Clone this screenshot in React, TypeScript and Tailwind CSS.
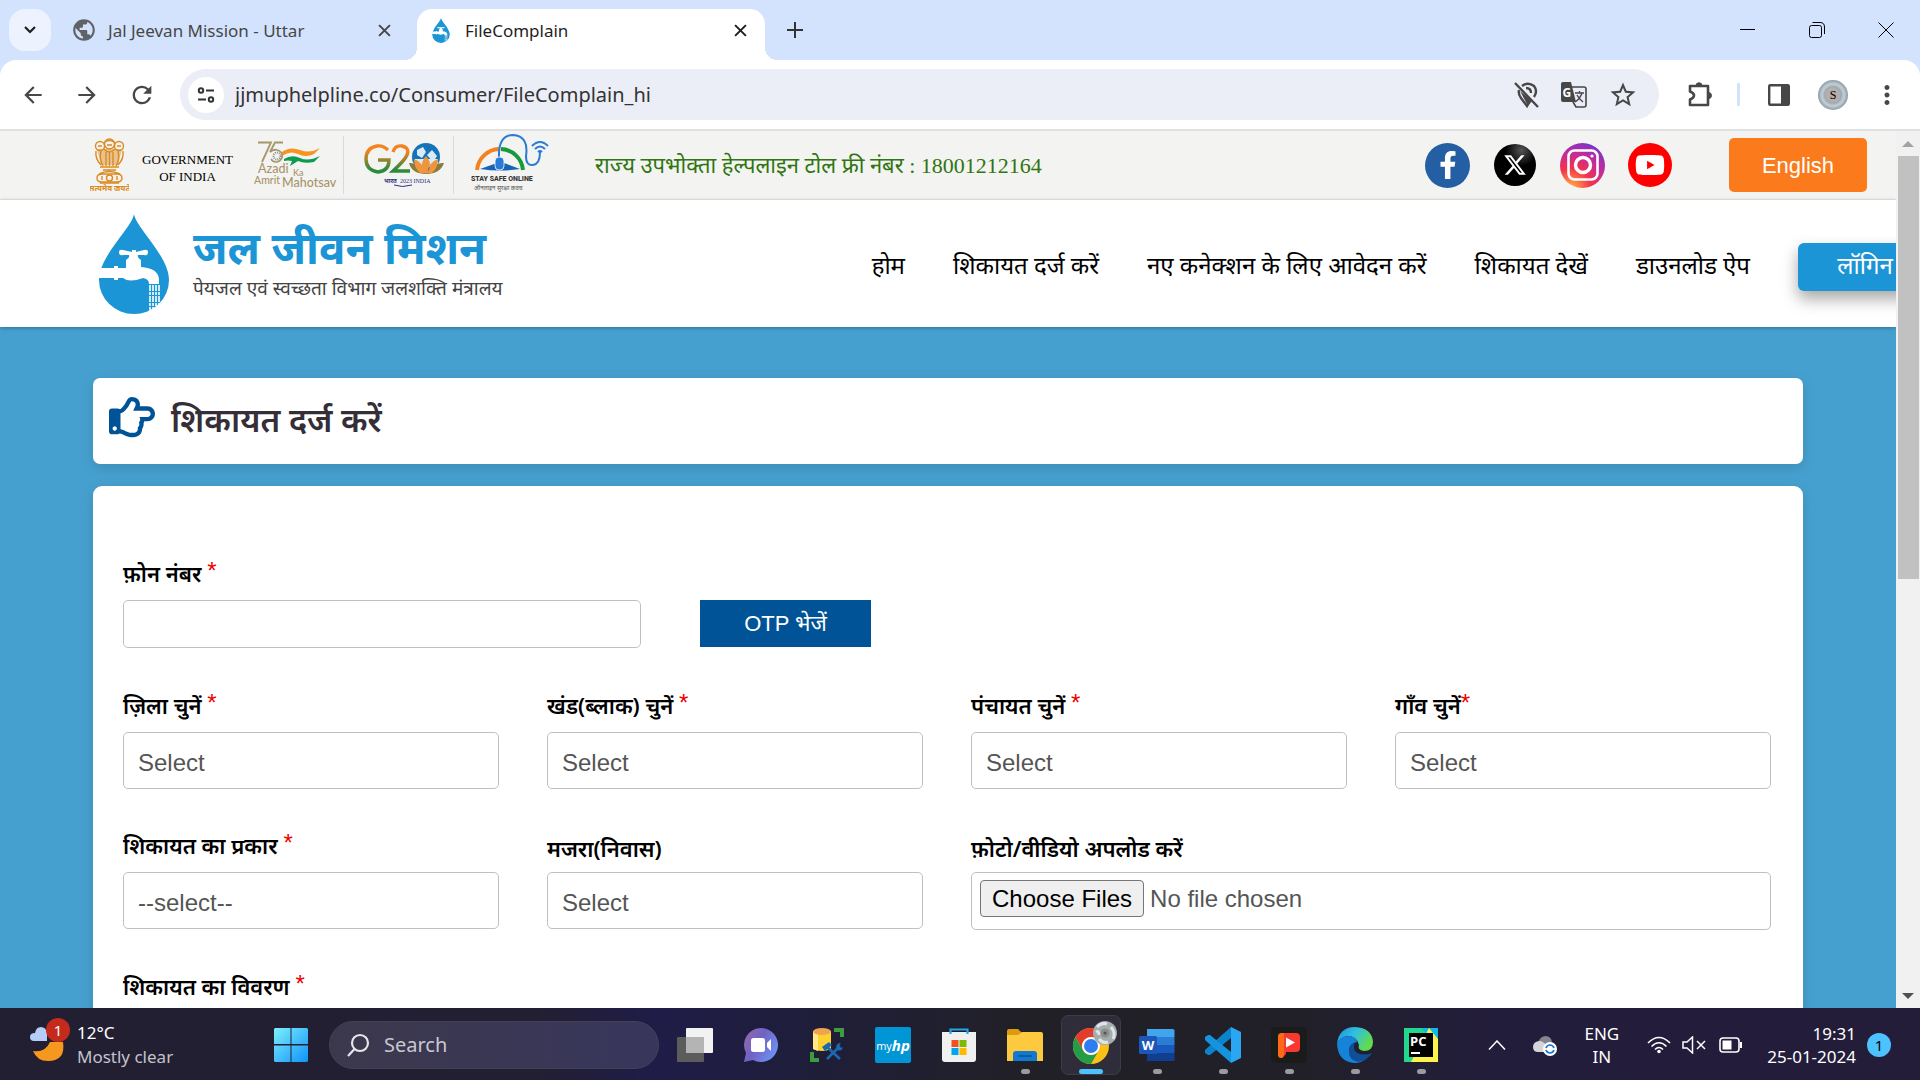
import type { ReactNode } from "react";
import { FaFacebookF, FaRegHandPointRight, FaYoutube } from "react-icons/fa";
import { FaXTwitter } from "react-icons/fa6";
import { MdArrowBack, MdArrowForward, MdRefresh, MdStarBorder, MdMoreVert, MdPublic } from "react-icons/md";

const ui = "font-['Noto_Sans','Open_Sans',sans-serif]";

function DropLogo({ className }: { className: string }) {
  return (
    <svg viewBox="0 0 70 100" className={className} aria-hidden="true">
      <path d="M35 0C37 14 70 42 70 66A35 34 0 0 1 0 66C0 42 33 14 35 0Z" fill="#1c95d6" />
      <path
        d="M20 38Q20 35 24 36L33 38V36H37V38L45 36Q49 35 49 38Q49 42 45 41L39 41Q38 44 42 46V53Q59 54 60 65V70H50Q50 65 44 64Q30 69 24 64H19V66H15V64H0V54H15V52H19V54H27V46Q31 44 30 41L24 41Q20 42 20 38Z"
        fill="#fff"
      />
      <path d="M51 71V98M54 71V96M57 71V95M60 71V92" stroke="#fff" strokeWidth="1.6" strokeDasharray="6 1 3 1" />
    </svg>
  );
}

function Emblem() {
  return (
    <svg viewBox="0 0 39 55" className="h-[55px] w-[39px]" aria-hidden="true">
      <g fill="none" stroke="#dc8a1e" strokeWidth="1.4">
        <circle cx="19.500" cy="6" r="5" />
        <circle cx="10" cy="8" r="4.500" />
        <circle cx="29" cy="8" r="4.500" />
        <path d="M15 4q4-3 9 0M17 7h5M8 8h4M27 8h4M14 11q5 6 11 0M6 13q-1 8 5 14M33 13q1 8-5 14M11 13q-2 8 2 15M28 13q2 8-2 15M16 14v14M19.500 14v14M23 14v14" />
        <path d="M10 29h19M13 32h13M9 36q10-5 21 0M7 40q0-4 5-4h15q5 0 5 4t-5 4H12q-5 0-5-4Z" />
        <circle cx="19.500" cy="40" r="3" />
        <path d="M12 38v4M27 38v4M10 45h19" />
      </g>
      <path d="M7 11h25l-4 16H11Z" fill="#dc8a1e" opacity=".45" />
      <text x="19.500" y="53" textAnchor="middle" fontSize="8" fontWeight="700" fill="#dc8a1e">सत्यमेव जयते</text>
    </svg>
  );
}

function AzadiLogo() {
  return (
    <svg viewBox="0 0 84 48" className="h-[48px] w-[84px]" aria-label="75 Azadi Ka Amrit Mahotsav">
      <path d="M4 1.500H17L8 21M29 1.500H21L16 11Q19 8 23 9" fill="none" stroke="#a8956a" strokeWidth="1.800" />
      <path d="M28 11Q36 5 46 9T66 7L60 13Q52 17 44 13T28 15Z" fill="#f7931e" />
      <path d="M30 18Q38 13 46 17T66 15L60 21Q50 23 44 20L36 25L38 20Q34 19 30 20Z" fill="#0c9b50" />
      <path d="M23 9A6 6 0 1 1 17 18" fill="none" stroke="#a8956a" strokeWidth="1.500" />
      <circle cx="23" cy="15" r="3.500" fill="none" stroke="#8d8d8d" strokeWidth="2" strokeDasharray="1 1" />
      <g fill="#a8956a" fontFamily="Lato, sans-serif" fontWeight="500">
        <text x="4" y="32" fontSize="12.500">Azadi</text>
        <text x="39" y="35" fontSize="9">Ka</text>
        <text x="0" y="43" fontSize="10.500">Amrit</text>
        <text x="28" y="46" fontSize="12.500">Mahotsav</text>
      </g>
    </svg>
  );
}

function G20Logo() {
  return (
    <svg viewBox="0 0 80 44" className="h-[44px] w-[80px]" aria-label="G20">
      <defs>
        <linearGradient id="g20" x1="0" y1="0" x2="0" y2="1">
          <stop offset=".2" stopColor="#f58220" />
          <stop offset=".9" stopColor="#2e8b3d" />
        </linearGradient>
      </defs>
      <path d="M24 7Q19 2 13 3Q2 5 2 16T14 29Q25 28 25 17H14M29 9Q31 2 38 3Q46 5 43 12Q41 17 29 28H46" fill="none" stroke="url(#g20)" strokeWidth="3.400" />
      <circle cx="62" cy="14" r="14" fill="#1673b8" />
      <path d="M53 7l6-3 3 5-4 6-5-3ZM63 12l5-5 5 6-4 6ZM51 16h23v8H51Z" fill="#d8ecf7" />
      <path d="M45 20Q54 19 62 30Q70 19 80 20Q76 31 62 31T45 20Z" fill="#8a7a3c" />
      <path d="M50 16Q58 18 61 30H56Q50 25 50 16ZM74 16Q66 18 63 30H68Q74 25 74 16ZM62 13Q70 22 62 31Q54 22 62 13Z" fill="#f0953c" />
      <text x="20" y="40" fontSize="6" fontWeight="700" fill="#2c2f83">भारत</text>
      <text x="36" y="40" fontSize="6" fill="#2c2f83" fontFamily="Liberation Serif, serif">2023 INDIA</text>
      <path d="M30 42Q38 45 48 42" fill="none" stroke="#2c2f83" />
    </svg>
  );
}

function StaySafeLogo() {
  return (
    <svg viewBox="0 0 78 58" className="h-[58px] w-[78px]" aria-label="Stay Safe Online">
      <path d="M6 36A23 23 0 0 1 28 15" fill="none" stroke="#f58220" strokeWidth="4" />
      <path d="M30 15A23 23 0 0 1 52 36" fill="none" stroke="#159a3c" strokeWidth="4" />
      <path d="M9 35L26 29H33L49 35Q29 38 9 35Z" fill="#1763b8" />
      <path d="M28 24Q27 1 42 1Q58 2 55 22Q55 32 62 31Q69 30 69 18" fill="none" stroke="#2a7bd6" strokeWidth="2" />
      <rect x="24" y="23" width="9" height="13" rx="4" fill="#2a7bd6" stroke="#fff" strokeWidth="0.800" />
      <path d="M61 12Q69 4 77 12M64 15Q69 10 74 15M67 18Q69 16 71 18" fill="none" stroke="#2a7bd6" strokeWidth="2" />
      <text x="0" y="47" fontSize="7" fontWeight="800" fill="#333" fontFamily="Roboto, sans-serif">STAY SAFE ONLINE</text>
      <text x="3" y="56" fontSize="6" fill="#555">ऑनलाइन सुरक्षा कवच</text>
    </svg>
  );
}

function Close({ className }: { className: string }) {
  return (
    <svg viewBox="0 0 12 12" className={className} fill="none" stroke="currentColor" aria-hidden="true">
      <path d="M1 1L11 11M11 1L1 11" strokeWidth="1.800" />
    </svg>
  );
}

function TabStrip() {
  return (
    <div className={`flex h-[60px] shrink-0 items-end pl-[9px] text-[17px] ${ui}`}>
      <button aria-label="Search tabs" className="mb-[9px] flex h-[42px] w-[42px] items-center justify-center rounded-2xl bg-[#ecf2fe]">
        <svg viewBox="0 0 12 8" className="w-[12px]" fill="none" stroke="#1f1f1f" strokeWidth="2.200"><path d="M1 1l5 5 5-5" /></svg>
      </button>
      <div className="mb-[9px] ml-[20px] flex h-[42px] w-[334px] items-center text-[#474747]">
        <MdPublic className="h-[26px] w-[26px] text-[#5f6368]" />
        <span className="ml-[11px] flex-1 pt-[2px]">Jal Jeevan Mission - Uttar</span>
        <button aria-label="Close tab" className="mr-[14px]"><Close className="h-[13px] w-[13px]" /></button>
      </div>
      <span className="h-[12px] w-[12px] bg-[radial-gradient(circle_at_0_0,transparent_12px,white_12px)]" />
      <div className="flex h-[51px] w-[348px] items-center rounded-t-[15px] bg-white pb-[9px] pl-[12px] text-[#1f1f1f]">
        <DropLogo className="h-[25px] w-[24px]" />
        <span className="ml-[12px] flex-1 pt-[2px]">FileComplain</span>
        <button aria-label="Close tab" className="mr-[18px]"><Close className="h-[13px] w-[13px]" /></button>
      </div>
      <span className="h-[12px] w-[12px] bg-[radial-gradient(circle_at_100%_0,transparent_12px,white_12px)]" />
      <button aria-label="New tab" className="mb-[22px] ml-[10px] text-[#333]">
        <svg viewBox="0 0 16 16" className="h-[16px] w-[16px]" stroke="currentColor" strokeWidth="2"><path d="M8 0v16M0 8h16" /></svg>
      </button>
      <div className="mb-[22px] ml-auto mr-[26px] flex items-center gap-[53px] text-black">
        <button aria-label="Minimize"><svg viewBox="0 0 16 16" className="h-[16px] w-[16px]" stroke="currentColor"><path d="M0 7.500h15" /></svg></button>
        <button aria-label="Restore">
          <svg viewBox="0 0 16 16" className="h-[16px] w-[16px]" fill="none" stroke="currentColor"><rect x=".5" y="3.500" width="12" height="12" rx="2" /><path d="M3.500 .5H11Q15.500 .5 15.500 5V12" /></svg>
        </button>
        <button aria-label="Close window"><svg viewBox="0 0 16 16" className="h-[16px] w-[16px]" stroke="currentColor"><path d="M.5 .5l15 15M15.500 .5l-15 15" /></svg></button>
      </div>
    </div>
  );
}

function Toolbar() {
  return (
    <div className={`flex h-[71px] shrink-0 items-center rounded-t-2xl border-b-2 border-[#dfe0e2] bg-white pl-[20px] pr-[18px] text-[#474747] ${ui}`}>
      <div className="flex items-center gap-[28px]">
        <button aria-label="Back"><MdArrowBack className="h-[26px] w-[26px]" /></button>
        <button aria-label="Forward"><MdArrowForward className="h-[26px] w-[26px]" /></button>
        <button aria-label="Reload"><MdRefresh className="h-[28px] w-[28px]" /></button>
      </div>
      <div className="ml-[24px] flex h-[51px] flex-1 items-center rounded-full bg-[#ebeef7] pl-[8px] pr-[21px]">
        <button aria-label="Site information" className="flex h-[36px] w-[36px] items-center justify-center rounded-full bg-white">
          <svg viewBox="0 0 18 16" className="w-[18px]" fill="none" stroke="#333" strokeWidth="2"><circle cx="4" cy="3.500" r="2.200" /><path d="M9 3.500h8M1 12.500h8" /><circle cx="14" cy="12.500" r="2.200" /></svg>
        </button>
        <input aria-label="Address" defaultValue="jjmuphelpline.co/Consumer/FileComplain_hi" className="ml-[11px] min-w-0 flex-1 bg-transparent text-[20px] text-[#333] outline-none" />
        <div className="flex items-center gap-[21px]">
          <svg viewBox="0 0 26 26" className="h-[26px] w-[26px]" fill="none" stroke="currentColor" strokeWidth="2.400">
            <path d="M1 1L24 25" /><path d="M8 4Q14-.5 20 4Q24 9 20 15M5 8Q4 12 7 16L13 24L15 20" /><path d="M6 9L14 24L18 19Z" fill="currentColor" stroke="none" /><path d="M12 6q5 0 5 5" />
          </svg>
          <svg viewBox="0 0 26 26" className="h-[26px] w-[26px]">
            <path d="M11 5H23Q25 5 25 7V23Q25 25 23 25H15L12 20" fill="none" stroke="currentColor" strokeWidth="1.600" />
            <path d="M2 0H10L15 20H2Q0 20 0 18V2Q0 0 2 0Z" fill="currentColor" />
            <text x="1.500" y="15" fontSize="12" fontWeight="700" fill="#fff">G</text>
            <path d="M14 11H23M18.500 9V11M21 11Q19 17 14 20M16 13Q18 17 22 20" fill="none" stroke="currentColor" strokeWidth="1.400" />
          </svg>
          <MdStarBorder className="h-[30px] w-[30px]" />
        </div>
      </div>
      <button aria-label="Extensions" className="ml-[28px]">
        <svg viewBox="0 0 26 26" className="h-[26px] w-[26px]" fill="none" stroke="currentColor" strokeWidth="2.600" strokeLinejoin="round">
          <path d="M3 4H21V23H3V17.500Q7 16 7 13.500T3 9.500Z" /><path d="M9 3.500Q9 .8 12 .8T15 3.500ZM22 10.500Q24.500 11 24.500 13.500T22 16.500Z" fill="currentColor" strokeWidth="1" />
        </svg>
      </button>
      <span className="ml-[24px] h-[23px] w-[3px] bg-[#d3e3fd]" />
      <button aria-label="Side panel" className="ml-[28px]">
        <svg viewBox="0 0 22 22" className="h-[22px] w-[22px]"><rect x="1.200" y="1.200" width="19.600" height="19.600" rx="1" fill="none" stroke="currentColor" strokeWidth="2.400" /><path d="M13 1H21V21H13Z" fill="currentColor" /></svg>
      </button>
      <button aria-label="Profile" className="ml-[28px] flex h-[30px] w-[30px] items-center justify-center rounded-full bg-[radial-gradient(circle_at_50%_50%,#b5aeaa_0,#b5aeaa_7px,#9aa8b0_8px,#c4d0d6_11px,#8b9aa4_15px)] font-['Liberation_Serif'] text-[12px] text-black">S</button>
      <button aria-label="Menu" className="ml-[24px]"><MdMoreVert className="h-[30px] w-[30px]" /></button>
    </div>
  );
}

function SocialLinks() {
  return (
    <div className="flex items-center">
      <a href="#facebook" aria-label="Facebook" className="flex h-[45px] w-[45px] items-end justify-center rounded-full bg-[#245fa3] pb-[9px] text-white"><FaFacebookF className="h-[28px] w-[28px]" /></a>
      <a href="#x" aria-label="X" className="ml-[24px] flex h-[42px] w-[42px] items-center justify-center rounded-full bg-[radial-gradient(circle_at_65%_15%,#555_0,#000_35%)] text-white"><FaXTwitter className="h-[24px] w-[24px]" /></a>
      <a href="#instagram" aria-label="Instagram" className="ml-[24px] flex h-[45px] w-[45px] items-center justify-center rounded-full bg-[radial-gradient(circle_at_25%_100%,#ffb347_0,#f5334a_35%,#c42a9c_62%,#5b3ad6_95%)]">
        <svg viewBox="0 0 32 32" className="h-[32px] w-[32px]" fill="none" stroke="#fff" strokeWidth="2.600"><rect x="1.500" y="1.500" width="29" height="29" rx="6" /><circle cx="16" cy="16" r="7.500" strokeWidth="3.500" /><circle cx="25" cy="7" r="1.600" fill="#fff" stroke="none" /></svg>
      </a>
      <a href="#youtube" aria-label="YouTube" className="ml-[23px] flex h-[44px] w-[44px] items-center justify-center rounded-full bg-[#f00] text-white"><FaYoutube className="h-[30px] w-[30px]" /></a>
    </div>
  );
}

function TopBar() {
  return (
    <div className="flex h-[69px] items-center border-b border-[#e8e8e8] bg-[#f3f3f1] pl-[90px] pr-[29px]">
      <Emblem />
      <p className="ml-[13px] pt-[6px] text-center font-['Liberation_Serif',serif] text-[13px] leading-[17px] text-black">GOVERNMENT<br />OF INDIA</p>
      <span className="ml-[21px]"><AzadiLogo /></span>
      <span className="ml-[5px] h-[58px] w-px bg-[#d9d9d9]" />
      <span className="ml-[20px]"><G20Logo /></span>
      <span className="ml-[9px] h-[58px] w-px bg-[#d9d9d9]" />
      <span className="ml-[17px] pb-[4px]"><StaySafeLogo /></span>
      <p className="ml-[46px] whitespace-nowrap font-['Liberation_Serif','Noto_Sans',serif] text-[22px] text-[#2f7510]">राज्य उपभोक्ता हेल्पलाइन टोल फ्री नंबर : 18001212164</p>
      <div className="ml-auto"><SocialLinks /></div>
      <button className="ml-[57px] h-[54px] w-[138px] rounded-[5px] bg-[#fb7a1b] font-['Liberation_Sans',sans-serif] text-[22px] text-white">English</button>
    </div>
  );
}

const links = ["होम", "शिकायत दर्ज करें", "नए कनेक्शन के लिए आवेदन करें", "शिकायत देखें", "डाउनलोड ऐप"];

function SiteHeader() {
  return (
    <header className="flex h-[127px] items-center overflow-hidden bg-white pl-[99px] shadow-[0_1px_4px_rgba(0,0,0,0.3)]">
      <DropLogo className="h-[100px] w-[70px] shrink-0" />
      <div className="ml-[24px] shrink-0 pb-[8px]">
        <h1 className="text-[44px] font-bold leading-[56px] text-[#1c95d6]">जल जीवन मिशन</h1>
        <p className="text-[19px] leading-[26px] text-[#444]">पेयजल एवं स्वच्छता विभाग जलशक्ति मंत्रालय</p>
      </div>
      <nav className="-mr-[36px] ml-auto flex shrink-0 items-center gap-[48px] whitespace-nowrap pt-[6px] text-[24px] text-black">
        {links.map((l) => <a key={l} href="#nav" className="pb-[4px]">{l}</a>)}
        <button className="h-[48px] w-[134px] rounded-[6px] bg-[#1c95d6] pb-[4px] text-white shadow-[0_8px_16px_rgba(0,0,0,0.35)]">लॉगिन</button>
      </nav>
    </header>
  );
}

function Label({ htmlFor, children, required }: { htmlFor: string; children: ReactNode; required?: boolean }) {
  return (
    <label htmlFor={htmlFor} className={`block h-[35px] whitespace-pre text-[22px] font-semibold text-black ${required ? "leading-[35px]" : "leading-[41px]"}`}>
      {children}
      {required && <span className="align-top font-['Liberation_Sans',sans-serif] text-[24px] font-normal leading-[30px] text-[#e00]">*</span>}
    </label>
  );
}

function SelectField({ id, label, required, value = "Select" }: { id: string; label: string; required?: boolean; value?: string }) {
  return (
    <div>
      <Label htmlFor={id} required={required}>{label}</Label>
      <select id={id} className="mt-[9px] block h-[57px] w-full appearance-none rounded-[5px] border border-[#c0c0c0] bg-white px-[14px] pt-[4px] font-['Liberation_Sans',sans-serif] text-[24px] text-[#555]">
        <option>{value}</option>
      </select>
    </div>
  );
}

function ComplaintForm() {
  return (
    <main className="flex flex-1 flex-col gap-[22px] bg-[#46a0cf] px-[93px] pt-[51px]">
      <section className="flex h-[86px] shrink-0 items-start rounded-[7px] bg-white pl-[16px] pt-[16px] shadow-[0_4px_14px_rgba(0,0,0,0.12)]">
        <FaRegHandPointRight className="h-[46px] w-[46px] text-[#005397]" />
        <h2 className="ml-[16px] text-[33px] font-semibold leading-[52px] text-[#332e38]">शिकायत दर्ज करें</h2>
      </section>
      <section className="shrink-0 rounded-t-[9px] bg-white pl-[30px] pr-[32px] pt-[70px] shadow-[0_4px_14px_rgba(0,0,0,0.12)]">
        <Label htmlFor="phone" required>{"फ़ोन नंबर "}</Label>
        <div className="mt-[9px] flex gap-[59px]">
          <input id="phone" type="tel" className="h-[48px] w-[518px] rounded-[5px] border border-[#c0c0c0] px-[14px] text-[24px]" />
          <button className="h-[47px] w-[171px] bg-[#005397] font-['Liberation_Sans','Noto_Sans',sans-serif] text-[22px] text-white">OTP भेजें</button>
        </div>
        <div className="mt-[40px] grid grid-cols-4 gap-x-[48px] gap-y-[39px]">
          <SelectField id="district" label="ज़िला चुनें " required />
          <SelectField id="block" label="खंड(ब्लाक) चुनें " required />
          <SelectField id="panchayat" label="पंचायत चुनें " required />
          <SelectField id="village" label="गाँव चुनें" required />
          <SelectField id="type" label="शिकायत का प्रकार " required value="--select--" />
          <SelectField id="majra" label="मजरा(निवास)" />
          <div className="col-span-2">
            <Label htmlFor="files">फ़ोटो/वीडियो अपलोड करें</Label>
            <input
              id="files"
              type="file"
              multiple
              className="mt-[9px] block h-[58px] w-full rounded-[5px] border border-[#c0c0c0] px-[8px] pt-[7px] font-['Liberation_Sans',sans-serif] text-[24px] text-[#555] file:mr-[6px] file:h-[37px] file:rounded-[4px] file:border file:border-[#767676] file:bg-[#efefef] file:px-[11px] file:text-black"
            />
          </div>
        </div>
        <div className="mt-[39px]">
          <Label htmlFor="details" required>{"शिकायत का विवरण "}</Label>
          <textarea id="details" className="mt-[9px] h-[120px] w-full rounded-[5px] border border-[#c0c0c0]" />
        </div>
      </section>
    </main>
  );
}

function TaskApp({ label, children, running, active }: { label: string; children: ReactNode; running?: boolean; active?: boolean }) {
  return (
    <button aria-label={label} className={`relative flex h-[60px] w-[60px] items-center justify-center rounded-[7px] ${active ? "border border-[#3d3b49] bg-[#2f2d3a]" : ""}`}>
      {children}
      {running && <span className="absolute bottom-px h-[5px] w-[9px] rounded-full bg-[#9a9a9f]" />}
      {active && <span className="absolute bottom-0 h-[5px] w-[24px] rounded-full bg-[#4cc2ff]" />}
    </button>
  );
}

const icon = "h-[36px] w-[36px]";

function Apps() {
  return (
    <div className="ml-[6px] flex gap-[6px]">
      <TaskApp label="Task view">
        <svg viewBox="0 0 36 36" className={icon}><rect x="9" y="1" width="27" height="25" rx="1" fill="#f2f2f2" /><rect y="10" width="27" height="25" rx="1" fill="#5c5c5c" /><path d="M9 10H27V26H9Z" fill="#b4b4b4" /></svg>
      </TaskApp>
      <TaskApp label="Chat">
        <svg viewBox="0 0 36 36" className={icon}>
          <defs><linearGradient id="chat" x1="0" x2="1" y2=".6"><stop stopColor="#9a6aa8" /><stop offset=".5" stopColor="#6f62c4" /><stop offset="1" stopColor="#6e8ff0" /></linearGradient></defs>
          <path d="M18 1A17 17 0 1 1 10 33L1 35L3 26A17 17 0 0 1 18 1Z" fill="url(#chat)" /><rect x="8" y="11" width="14" height="14" rx="2.500" fill="#fff" /><path d="M24 16L28 12V24L24 20Z" fill="#fff" />
        </svg>
      </TaskApp>
      <TaskApp label="Data tools">
        <svg viewBox="0 0 36 36" className={icon}>
          <path d="M4 4H22V22Q13 26 4 22Z" fill="#fdd22f" /><path d="M4 4H9V24L4 22Z" fill="#ffe98a" /><ellipse cx="13" cy="4.500" rx="9" ry="3.500" fill="#efa550" />
          <path d="M25 3H33V10M3 25V33H10" fill="none" stroke="#3f9b3f" strokeWidth="4" /><path d="M17 19L31 32M31 19L18 32" stroke="#1b68b3" strokeWidth="2.600" /><path d="M13 20L20 15L23 18L16 24Z" fill="#1b68b3" /><path d="M27 21Q27 16 32 16L30 19L32 21L34 20Q33 25 28 23Z" fill="#1b68b3" />
        </svg>
      </TaskApp>
      <TaskApp label="myHP">
        <span className="flex h-[36px] w-[36px] items-center justify-center rounded-[2px] bg-[#0096d6] font-['Open_Sans',sans-serif] text-[11px] leading-none text-white">my<b className="text-[15px] italic">hp</b></span>
      </TaskApp>
      <TaskApp label="Store">
        <svg viewBox="0 0 36 36" className={icon}><path d="M1 5H35V32Q35 35 32 35H4Q1 35 1 32Z" fill="#f0f0f0" /><path d="M9.500 7V2.500H26.500V7" fill="none" stroke="#1ea7e8" strokeWidth="2.200" /><path d="M10.500 13h7v7h-7Z" fill="#f25022" /><path d="M18.500 13h7v7h-7Z" fill="#7fba00" /><path d="M10.500 21h7v7h-7Z" fill="#00a4ef" /><path d="M18.500 21h7v7h-7Z" fill="#ffb900" /></svg>
      </TaskApp>
      <TaskApp label="File Explorer" running>
        <svg viewBox="0 0 36 36" className={icon}><path d="M0 4Q0 2 2 2H11L15 6V9H0Z" fill="#dc9a0c" /><path d="M0 8H11L15 5H34Q36 5 36 7V34H0Z" fill="#fcc93f" /><path d="M6 34V27Q6 24 9 24H27Q30 24 30 27V34Z" fill="#1279d0" /><path d="M11 29H25" stroke="#0b529a" strokeWidth="1.500" /></svg>
      </TaskApp>
      <TaskApp label="Chrome" active>
        <svg viewBox="0 0 48 45" className="mb-[7px] ml-[8px] h-[45px] w-[48px]">
          <circle cx="20" cy="27" r="18" fill="#fbc116" />
          <path d="M4.400 18A18 18 0 0 1 35.600 18H20A9 9 0 0 0 12.200 31.500Z" fill="#e33b2e" />
          <path d="M4.400 18A18 18 0 0 0 20 45L27.800 31.500A9 9 0 0 1 12.200 31.500Z" fill="#259d48" />
          <circle cx="20" cy="27" r="9" fill="#fff" /><circle cx="20" cy="27" r="7" fill="#2f7df0" />
          <circle cx="34" cy="14" r="12" fill="#a4acb0" /><path d="M26 8q5-5 10-3M40 8q5 6 2 12M28 20q4 5 9 3M25 13q3-2 3 3" fill="none" stroke="#dfe4e6" strokeWidth="3" /><circle cx="34" cy="14" r="4.500" fill="#8d8d8b" /><circle cx="34" cy="14" r="1.500" fill="#555" />
        </svg>
      </TaskApp>
      <TaskApp label="Word" running>
        <svg viewBox="0 0 36 36" className={icon}><path d="M8 2H34L35.500 3V10H8Z" fill="#41a5ee" /><path d="M8 10H35.500V18H8Z" fill="#2b7cd3" /><path d="M8 18H35.500V26H8Z" fill="#185abd" /><path d="M8 26H35.500V34H8Z" fill="#103f91" /><rect y="9" width="18" height="18" rx="1.500" fill="#1b56b8" /><text x="9" y="23" textAnchor="middle" fontSize="13" fontWeight="700" fill="#fff" fontFamily="Open Sans, sans-serif">W</text></svg>
      </TaskApp>
      <TaskApp label="Visual Studio Code" running>
        <svg viewBox="0 0 36 36" className={icon}><path d="M26 0L0 23V26L3 28H5L26 11Z" fill="#0b84cc" /><path d="M26 36L0 13V10L3 8H5L26 25Z" fill="#1593dc" /><path d="M26 0L36 5V31L26 36Z" fill="#2aa7f3" /></svg>
      </TaskApp>
      <TaskApp label="Player" running>
        <svg viewBox="0 0 36 36" className={icon}><rect width="36" height="36" rx="5" fill="#1b1b1a" /><path d="M11 6H25Q29 6 29 10V21Q29 25 25 25H15V27L11 31Q7 31 7 27V10Q7 6 11 6Z" fill="#f8392f" /><path d="M11 6H13V27Q13 31 10 31Q7 31 7 27V10Q7 6 11 6Z" fill="#ff6a18" /><path d="M15 10.500L24 15.500L15 20.500Z" fill="#fff" /></svg>
      </TaskApp>
      <TaskApp label="Edge" running>
        <svg viewBox="0 0 36 36" className={icon}>
          <defs><linearGradient id="edge" x1="0" x2="1" y2=".5"><stop stopColor="#1d8fdc" /><stop offset=".5" stopColor="#30bfe0" /><stop offset="1" stopColor="#62dc4c" /></linearGradient></defs>
          <path d="M0 17Q2 0 18 0Q35 1 36 15Q36 24 27 24Q20 23 22 18Q20 9 10 9Q2 11 0 17Z" fill="url(#edge)" /><path d="M0 17Q3 9 12 9Q20 10 20 15Q10 17 13 27Q18 36 29 32Q24 36 18 36Q1 35 0 17Z" fill="#1583d8" /><path d="M14 18Q8 32 21 35Q31 33 35 26Q24 30 18 24Q16 20 18 15Z" fill="#0f4f97" />
        </svg>
      </TaskApp>
      <TaskApp label="PyCharm" running>
        <svg viewBox="0 0 36 36" className={icon}><rect x="1" y="1" width="34" height="34" fill="#22d88f" /><path d="M18 1H35V20Z" fill="#14b8e8" /><path d="M35 12V35H8L26 1Z" fill="#fbf24a" /><rect x="6" y="6" width="24" height="24" fill="#000" /><text x="7" y="19" fontSize="13" fontWeight="700" fill="#fff" fontFamily="Open Sans, sans-serif">PC</text><path d="M8 26h9" stroke="#fff" strokeWidth="2" /></svg>
      </TaskApp>
    </div>
  );
}

function Tray() {
  return (
    <div className="ml-auto flex items-center pr-[29px] text-white">
      <svg viewBox="0 0 18 10" className="h-[10px] w-[18px]" fill="none" stroke="currentColor" strokeWidth="1.500"><path d="M1 9.500L9 1L17 9.500" /></svg>
      <svg viewBox="0 0 26 22" className="ml-[26px] h-[22px] w-[26px]">
        <path d="M6 9Q8 2 14 2Q20 3 20 9L22 16H6Z" fill="#84848f" /><path d="M6 18Q1 18 1 13T7 7Q11 7 14 11V18Z" fill="#d5d5da" />
        <circle cx="18" cy="15" r="7" fill="#fff" /><path d="M14 14Q15 11 18 11T22 14M22 16Q21 19 18 19T14 16" fill="none" stroke="#1a75cf" strokeWidth="1.700" />
      </svg>
      <p className="ml-[27px] text-center text-[17px] leading-[23px]">ENG<br />IN</p>
      <svg viewBox="0 0 24 18" className="ml-[28px] h-[18px] w-[24px]" fill="none" stroke="currentColor" strokeWidth="1.600"><path d="M1 7Q12-4 23 7M4.500 10.500Q12 3 19.500 10.500M8 13.500Q12 9.500 16 13.500" /><circle cx="12" cy="15.500" r="1.800" fill="currentColor" stroke="none" /></svg>
      <svg viewBox="0 0 24 18" className="ml-[11px] h-[18px] w-[24px]" fill="none" stroke="currentColor" strokeWidth="1.500"><path d="M1 6H5L10.500 1V17L5 12H1ZM15 5L23 13M23 5L15 13" /></svg>
      <svg viewBox="0 0 24 16" className="ml-[13px] h-[16px] w-[24px]"><rect x="1" y="1" width="19" height="14" rx="3" fill="none" stroke="currentColor" strokeWidth="1.600" /><rect x="3.500" y="3.500" width="9" height="9" fill="currentColor" /><path d="M21 5h2v6h-2Z" fill="currentColor" /></svg>
      <p className="ml-[24px] text-right text-[17px] leading-[23px]">19:31<br />25-01-2024</p>
      <span className="ml-[11px] flex h-[24px] w-[24px] items-center justify-center rounded-full bg-[#4cc2ff] text-[15px] text-black">1</span>
    </div>
  );
}

function Taskbar() {
  return (
    <footer className={`flex h-[72px] shrink-0 items-center bg-[linear-gradient(90deg,#231f33_0%,#231f33_28%,#1f1c48_34%,#1f1e38_43%,#212026_54%,#212029_68%,#231d3c_78%,#231d3a_100%)] pl-[30px] pt-[2px] ${ui}`}>
      <div className="relative h-[54px] w-[40px]">
        <svg viewBox="0 0 40 54" className="h-[54px] w-[40px]">
          <path d="M33 24Q36 43 18 43Q7 43 3 33Q15 35 20 24Z" fill="#f6981f" /><path d="M4 23Q0 23 0 19T5 15Q6 9 11 9T17 15V23Z" fill="#b7cdf8" />
        </svg>
        <span className="absolute right-0 top-0 flex h-[24px] w-[24px] items-center justify-center rounded-full bg-[#c42b1c] text-[15px] text-white">1</span>
      </div>
      <p className="ml-[7px] w-[150px] text-[17px] leading-[24px] text-white">12°C<br /><span className="text-[#c4c3cb]">Mostly clear</span></p>
      <button aria-label="Start" className="ml-[46px]">
        <svg viewBox="0 0 36 36" className={icon}>
          <defs><linearGradient id="win" x2="1" y2="1"><stop stopColor="#7df0fb" /><stop offset="1" stopColor="#0f92fb" /></linearGradient></defs>
          <path d="M2 1H17.500V17H1V2ZM18.500 1H34L35 2V17H18.500ZM1 18.500H17.500V35H2L1 34ZM18.500 18.500H35V34L34 35H18.500Z" fill="url(#win)" />
        </svg>
      </button>
      <label className="ml-[20px] flex h-[48px] w-[330px] items-center rounded-full border border-[#444155] bg-[linear-gradient(90deg,#3c384c,#38365c)] pl-[16px]">
        <svg viewBox="0 0 24 24" className="h-[24px] w-[24px]" fill="none" stroke="#e6e6ea" strokeWidth="2.200"><circle cx="14" cy="10" r="8" /><path d="M8.500 16L2 23" /></svg>
        <input aria-label="Search" placeholder="Search" className="ml-[14px] min-w-0 flex-1 bg-transparent text-[20px] outline-none placeholder:text-[#c9c8d2]" />
      </label>
      <Apps />
      <Tray />
    </footer>
  );
}

export default function App() {
  return (
    <div className="flex h-screen flex-col overflow-hidden bg-[#d3e3fd]">
      <TabStrip />
      <Toolbar />
      <div className="flex min-h-0 flex-1">
        <div className="flex min-w-0 flex-1 flex-col overflow-hidden bg-[#46a0cf] font-['Noto_Sans','Liberation_Sans',sans-serif]">
          <div className="shrink-0"><TopBar /></div>
          <div className="z-10 shrink-0"><SiteHeader /></div>
          <ComplaintForm />
        </div>
        <div className="flex w-[24px] flex-col items-center justify-between bg-[#f1f1f1]">
          <svg viewBox="0 0 12 6" className="mt-[10px] h-[6px] w-[12px]" fill="#a3a3a3"><path d="M0 6L6 0L12 6Z" /></svg>
          <div className="mt-[9px] h-[423px] w-[21px] bg-[#c1c1c1]" />
          <svg viewBox="0 0 12 6" className="mb-[9px] mt-auto h-[6px] w-[12px]" fill="#505050"><path d="M0 0L6 6L12 0Z" /></svg>
        </div>
      </div>
      <Taskbar />
    </div>
  );
}
